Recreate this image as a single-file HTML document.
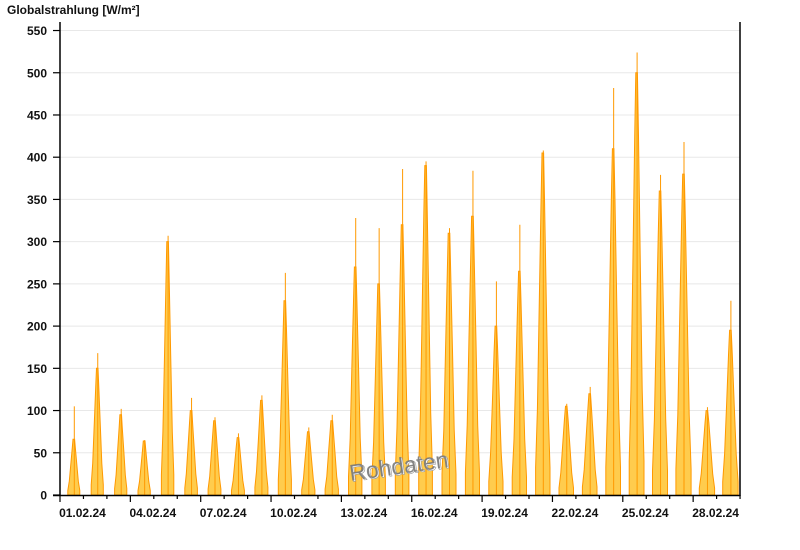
<!DOCTYPE html>
<html><head><meta charset="utf-8"><style>
html,body{margin:0;padding:0;background:#fff;width:800px;height:550px;overflow:hidden}
svg text{font-family:"Liberation Sans",Arial,sans-serif;font-weight:bold;font-size:12px;fill:#111}
</style></head><body>
<svg id="s" width="800" height="550" xmlns="http://www.w3.org/2000/svg">
<text x="7" y="14">Globalstrahlung [W/m²]</text>
<g id="grid"></g>
<g id="bars"></g>
<text x="399" y="474" text-anchor="middle" transform="rotate(-8 399 468)" style="font-size:23px;font-weight:normal;fill:#fff;stroke:#999;stroke-width:0.6" dx="1" dy="1">Rohdaten</text>
<text x="399" y="474" text-anchor="middle" transform="rotate(-8 399 468)" style="font-size:23px;font-weight:normal;fill:#777;opacity:0.85">Rohdaten</text>
<line x1="60" y1="22" x2="60" y2="496" stroke="#000" stroke-width="1.5"/>
<line x1="740" y1="22" x2="740" y2="496" stroke="#000" stroke-width="1.5"/>
<line x1="53" y1="495.5" x2="740" y2="495.5" stroke="#000" stroke-width="1.5"/>
<g id="ax"></g>
</svg>
<script>
var NS="http://www.w3.org/2000/svg";
function el(p,t,a,txt){var e=document.createElementNS(NS,t);for(var k in a)e.setAttribute(k,a[k]);if(txt!=null)e.textContent=txt;p.appendChild(e);return e;}
var g=document.getElementById('grid'),ax=document.getElementById('ax'),b=document.getElementById('bars');
function Y(v){return 495-v*0.8445;}
for(var v=0;v<=550;v+=50){var y=Y(v);
 if(v>0)el(g,'line',{x1:60,x2:740,y1:y,y2:y,stroke:'#e8e8e8','stroke-width':1});
 el(ax,'line',{x1:53,x2:60,y1:y,y2:y,stroke:'#000','stroke-width':1.2});
 el(ax,'text',{x:47,y:y+4.5,'text-anchor':'end'},String(v));}
var D=23.45;
for(var i=0;i<=29;i++){var x=60+D*i;el(ax,'line',{x1:x,x2:x,y1:495,y2:(i%3==0)?502:499,stroke:'#000','stroke-width':1.2});}
var lab=['01','04','07','10','13','16','19','22','25','28'];
for(var j=0;j<lab.length;j++){var x=60+D*(3*j)+D;el(ax,'text',{x:x-1,y:517,'text-anchor':'middle'},lab[j]+'.02.24');}
var pk=[[105,66],[168,150],[102,95],[65,64],[307,300],[115,100],[92,88],[73,68],[118,112],[263,230],[80,75],[95,88],[328,270],[316,250],[386,320],[395,390],[316,310],[384,330],[253,200],[320,265],[408,405],[108,105],[128,120],[482,410],[524,500],[379,360],[418,380],[104,100],[230,195]];
for(var i=0;i<pk.length;i++){
 var c=60+D*i+13.8,w=6+i*0.06,p=pk[i][1],s=pk[i][0];
 var pts=[[c-w,0],[c-w,0.08],[c-w*0.75,0.25],[c-w*0.5,0.55],[c-w*0.25,0.85],[c-0.8,1],[c+0.8,1],[c+w*0.25,0.85],[c+w*0.5,0.55],[c+w*0.75,0.25],[c+w,0.08],[c+w,0]];
 el(b,'polygon',{points:pts.map(function(q){return q[0].toFixed(1)+','+Y(q[1]*p).toFixed(1)}).join(' '),fill:'#ffcc4d',stroke:'#ff9900','stroke-width':1});
 el(b,'line',{x1:c+0.5,x2:c+0.5,y1:Y(0),y2:Y(s),stroke:'#ff9900','stroke-width':1});
}
</script>
</body></html>
